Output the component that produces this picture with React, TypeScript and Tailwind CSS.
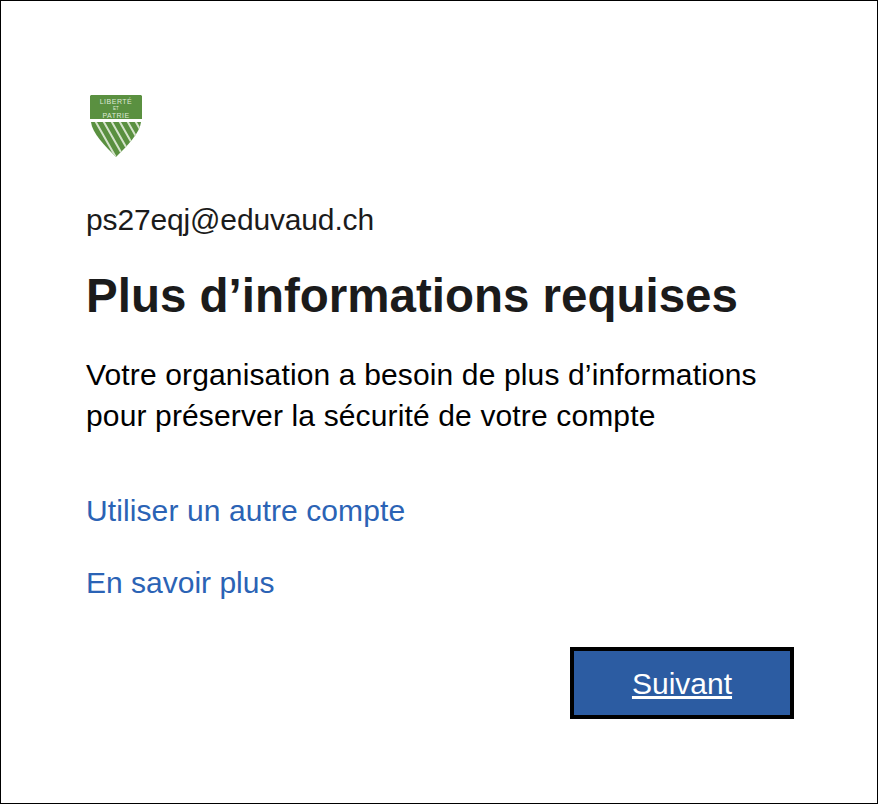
export default function App() {
  return (
    <div className="h-[804px] w-[878px] border border-black bg-white pl-[85px] pr-[83px] pt-[94px] font-['Liberation_Sans',Arial,sans-serif] text-[#1b1b1b]">
      <ShieldLogo />

      <div className="mt-[44px] text-[30px] leading-[36px] tracking-[-0.15px]">ps27eqj@eduvaud.ch</div>

      <h1 className="mt-[28px] text-[47.5px] font-bold leading-[60px]">Plus d’informations requises</h1>

      <p className="mt-[28px] text-[30px] leading-[41px] tracking-[0.14px] text-black">
        Votre organisation a besoin de plus d’informations
        <br />
        pour préserver la sécurité de votre compte
      </p>

      <div className="mt-[57px] text-[30px] leading-[36px] text-[#2b63b5]">
        <a className="block tracking-[0.1px]">Utiliser un autre compte</a>
        <a className="mt-[36px] block">En savoir plus</a>
      </div>

      <div className="mt-[46px] flex justify-end">
        <button className="h-[72px] w-[224px] border-4 border-black bg-[#2c5ca2] text-[30px] text-white underline">
          Suivant
        </button>
      </div>
    </div>
  )
}

function ShieldLogo() {
  return (
    <svg className="ml-[4px] block" width="52" height="63" viewBox="0 0 52 63">
      <defs>
        <clipPath id="shield-bottom">
          <path d="M1 27H51C50 38 37 51 26 62C15 51 2 38 1 27Z" />
        </clipPath>
      </defs>
      <path d="M1 0H51L52 1V24H0V1Z" fill="#5a9040" />
      <path d="M1 27H51C50 38 37 51 26 62C15 51 2 38 1 27Z" fill="#5a9040" />
      <g clipPath="url(#shield-bottom)" stroke="#d5e3cb" strokeWidth="2">
        <path d="M3 22L28 66M11 22L36 66M19 22L44 66M27 22L52 66M35 22L60 66M43 22L68 66" />
      </g>
      <text x="26" y="9" textAnchor="middle" fill="#dfe9d7" fontSize="7" letterSpacing="0.5">LIBERTÉ</text>
      <text x="26" y="15" textAnchor="middle" fill="#dfe9d7" fontSize="4.5">ET</text>
      <text x="26" y="22.5" textAnchor="middle" fill="#dfe9d7" fontSize="7" letterSpacing="0.5">PATRIE</text>
    </svg>
  )
}
